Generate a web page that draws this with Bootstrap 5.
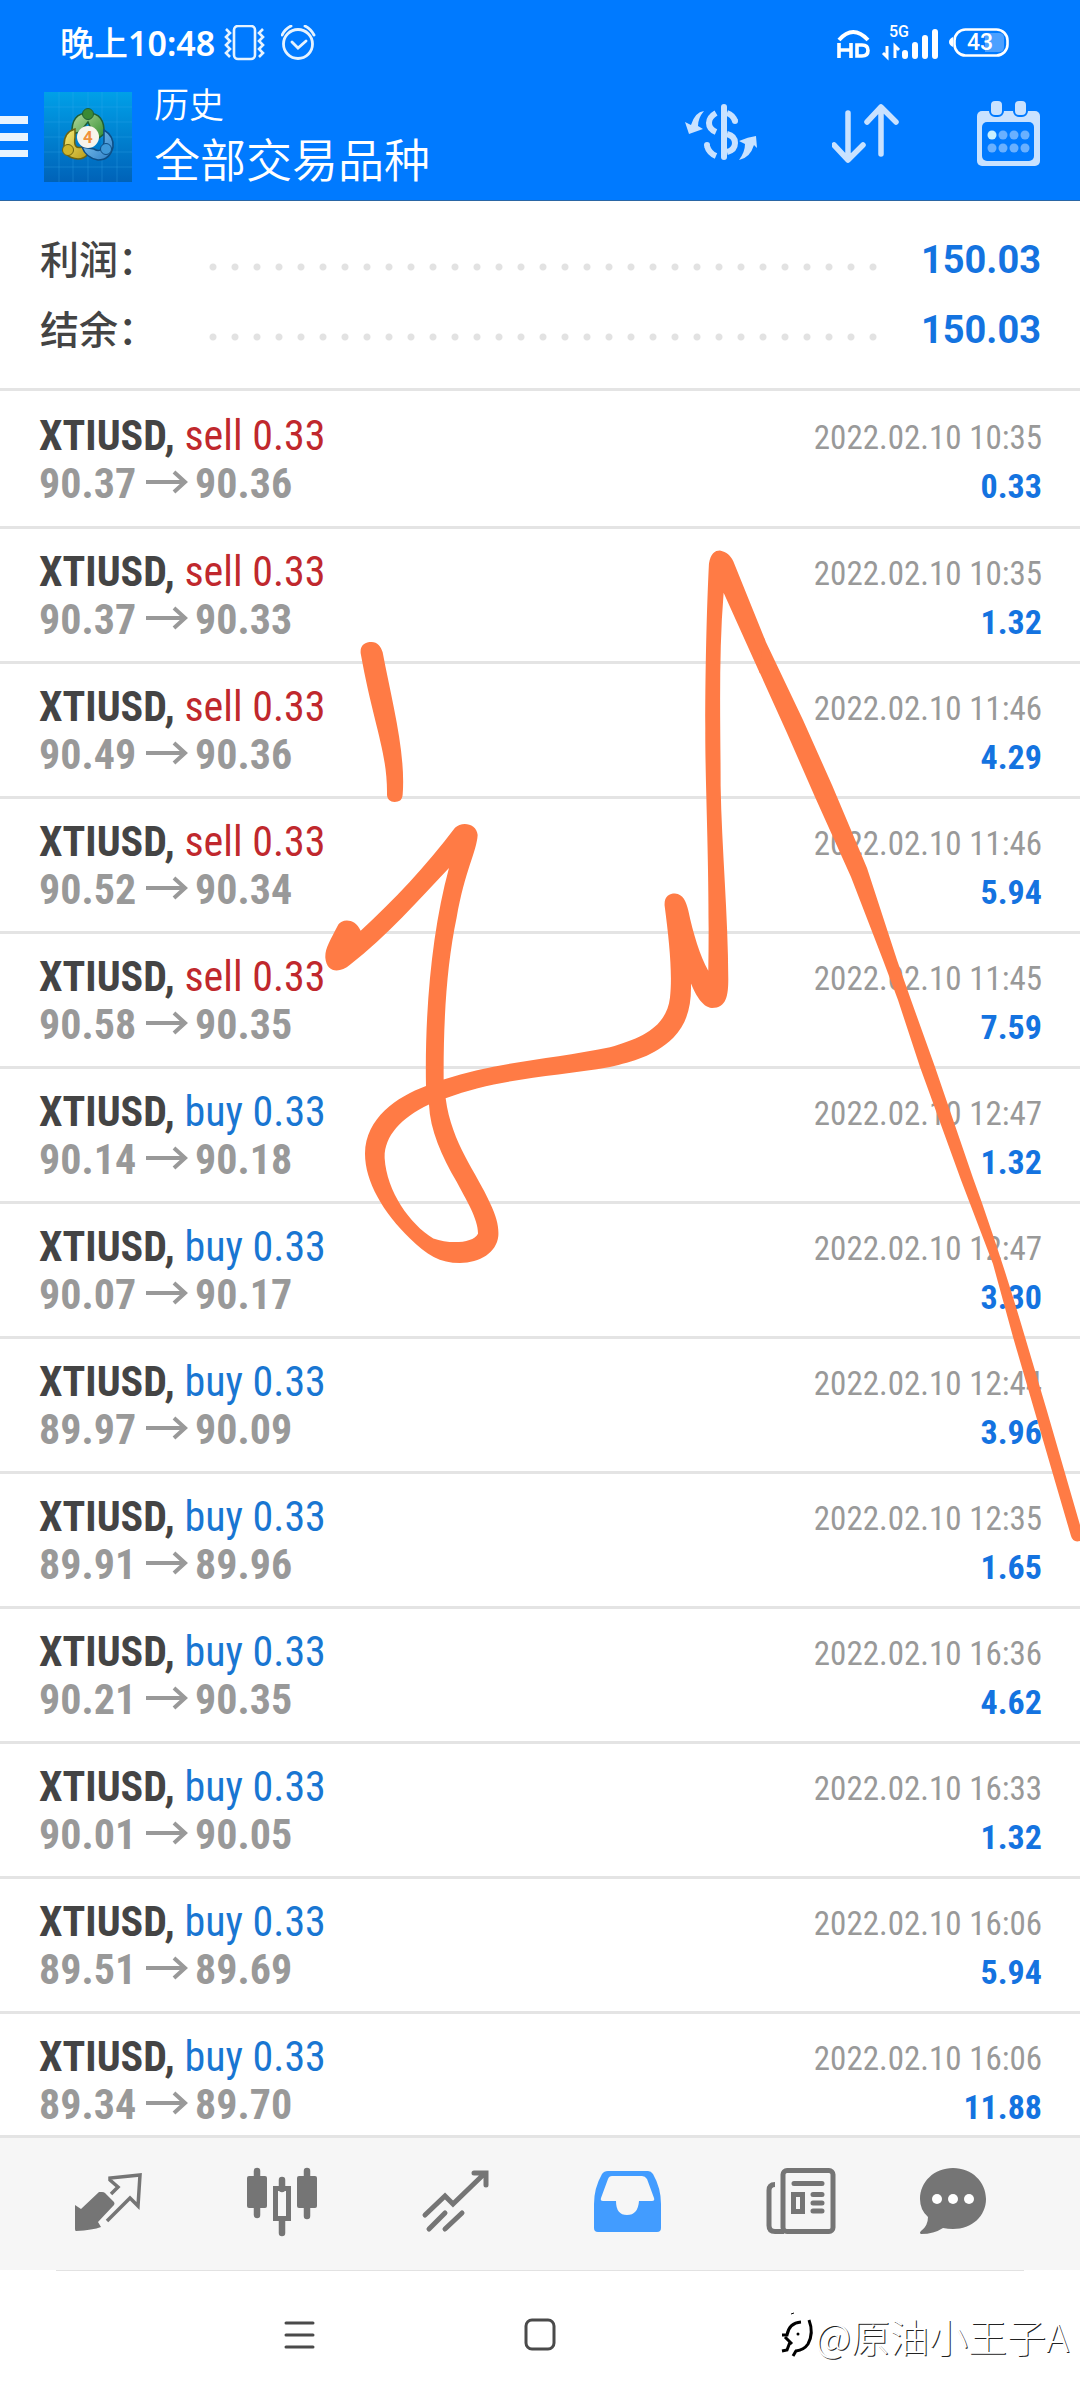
<!DOCTYPE html>
<html lang="zh-CN">
<head>
<meta charset="utf-8">
<meta name="viewport" content="width=device-width, initial-scale=1">
<title>历史</title>
<link href="https://cdn.jsdelivr.net/npm/bootstrap@5.3.0/dist/css/bootstrap.min.css" rel="stylesheet">
<style>
body{font-family:Roboto,"Noto Sans CJK SC",sans-serif;background:#fff;color:#444}
svg{display:block;flex:none}
.top-area{background:#007aff;color:#fff;border-bottom:1px solid #2a66a5;height:201px}
.status-row{height:84px;padding:2px 71px 0 60px;font-size:34px;line-height:40px;font-weight:500;font-family:"Noto Sans","Noto Sans CJK SC",sans-serif}
.title-row{height:116px;padding-right:40px}
.plain-btn{background:none;border:0;padding:0}
.app-title{font-family:"Noto Sans CJK SC",sans-serif;font-weight:350;margin-left:22px}
.app-title h1{font-size:35px;line-height:38px;margin:0;font-weight:inherit}
.app-title p{font-size:46px;line-height:70px;margin:0}
.tools{gap:74px}
.summary{padding:24px 39px 23px 40px}
.sum-line{height:70px;font-size:38px;line-height:70px;font-weight:500}
.sum-label{width:162px;font-size:39px;line-height:64px;height:70px;font-family:"Noto Sans CJK SC",sans-serif}
.dots{height:8px;margin-top:14px;background:radial-gradient(circle at 11px 4px,#e2e2e2 3px,transparent 4px) 0 0/22px 8px repeat-x}
.sum-value{width:156px;color:#1473e0;font-weight:700}
.history{border-top:3px solid #e4e4e4;min-height:0;overflow:hidden}
.deal{height:135px;padding:19px 38px 0 39px;border-bottom:3px solid #e4e4e4;font-family:"Roboto Condensed","Liberation Sans Narrow",Roboto,sans-serif}
.deal:first-of-type{height:138px;padding-top:21px}
.l-line{font-size:42px;line-height:48px;white-space:nowrap}
.r-line{font-size:33px;line-height:48px;white-space:nowrap;padding-top:2px}
.sym{font-weight:700;color:#444}
.sell{color:#c0282d}
.buy{color:#1976d2}
.price{color:#999;font-weight:700}
.price svg{display:inline-block;margin:0 7px 10px 10px;vertical-align:middle}
.when{color:#999}
.gain{color:#1473e0;font-weight:700;font-size:34px}
.tabs-bar{height:135px;background:#f6f6f6;border-top:3px solid #e4e4e4;padding:0 61px 4px 22px;color:#757575}
.tabs-bar a{flex:173 1 0;color:inherit}
.tabs-bar a:last-child{flex-grow:132}
.tabs-bar a.current{color:#429cff}
.sys-bar{height:130px;color:#4a4a4a;margin:0}
.sys-line{height:1px;background:#e2e2e2;margin:0 56px}
.sys-row{height:127px}
.sys-menu{margin-left:284px}
.sys-home{margin-left:209px}
.stamp{margin-left:auto;padding-right:11px;color:#fff;font-family:"Noto Sans CJK SC",sans-serif;font-weight:300;font-size:39px;line-height:50px;text-shadow:1px 1px 0 #222}
.scribble{position:absolute;left:0;top:540px;pointer-events:none}
</style>
</head>
<body>
<div class="position-relative d-flex flex-column vh-100 overflow-hidden">
<header class="top-area flex-shrink-0">
  <div class="status-row d-flex align-items-center">
    <span>晚上<b class="fw-semibold">10:48</b></span>
    <svg class="ms-2" width="42" height="36" viewBox="-2 1 42 36" fill="none" stroke="#e6f3ff" stroke-width="2.6"><rect x="9" y="2" width="21" height="33" rx="4"/><path d="M1 5l4 4-4 4 4 4-4 4 4 4-4 4 4 4M38 5l-4 4 4 4-4 4 4 4-4 4 4 4-4 4"/></svg>
    <svg class="ms-3" width="36" height="36" viewBox="1 1 36 36" fill="none" stroke="#e6f3ff" stroke-width="2.8" stroke-linecap="round"><circle cx="18" cy="20" r="14.500"/><path d="M12 18l6 6 8-7M2 11q3-6 9-9M34 11q-3-6-9-9"/></svg>
    <svg class="ms-auto" width="173" height="48" viewBox="836 19 173 48" fill="none" stroke="#fff"><path d="M839 40Q853 24 868 40" stroke-width="4"/><path d="M839 43v15M851 43v15M839 50h12M857 45v11h5q6 0 6-5.500t-6-5.500z" stroke-width="3.600"/><path d="M883 53l4 4V46M899 50l-4-4v12" stroke-width="3"/><path d="M905 53v3M915 45v11M925 38v18M935 32v24" stroke-width="6" stroke-linecap="round"/><path d="M985 33h14q5 0 5 5v9q0 5-5 5h-14z" fill="#4ca0ff" stroke="none"/><rect x="954.500" y="29.500" width="53" height="26" rx="11" stroke-width="2.600"/><path d="M953 37q-4 2-4 5t4 5z" fill="#fff" stroke="none"/><text x="889" y="37" font-size="16" font-family="Roboto" font-weight="500" fill="#fff" stroke="none">5G</text><text x="967" y="50" font-size="23" font-family="Roboto" font-weight="500" fill="#fff" stroke="none">43</text></svg>
  </div>
  <div class="title-row d-flex align-items-start">
    <button class="plain-btn" aria-label="菜单"><svg width="44" height="100" viewBox="0 84 44 100" fill="#e8f4ff"><path d="M0 116h28v8H0zM0 133h28v8H0zM0 150h28v7H0z"/></svg></button>
    <svg class="mt-2" width="88" height="90" viewBox="0 0 88 90"><defs><linearGradient id="sky" x2="0" y2="1"><stop stop-color="#00a0e8"/><stop offset="1" stop-color="#0062b8"/></linearGradient><linearGradient id="gl" x2="1" y2="1"><stop stop-color="#b4dca0"/><stop offset="1" stop-color="#2f8a2c"/></linearGradient><linearGradient id="yl" x2="1" y2="1"><stop stop-color="#f6ec78"/><stop offset="1" stop-color="#b89a16"/></linearGradient><linearGradient id="bw" x2="1" y2="1"><stop stop-color="#8fd0f6"/><stop offset="1" stop-color="#2a7cc4"/></linearGradient></defs><rect width="88" height="90" fill="url(#sky)"/><path d="M15 0v90M29 0v90M44 0v90M58 0v90M73 0v90M0 15h88M0 30h88M0 45h88M0 60h88M0 75h88" stroke="#3bb0ec" stroke-opacity=".28"/><g stroke-width="1.500"><path d="M28 42Q27 21 44 21T60 42L52 48 44 30 36 40z" fill="url(#gl)" stroke="#205f35"/><path d="M31 37Q20 40 20 53 20 66 34 67 40 67 44 62L38 55Q29 58 31 45z" fill="url(#yl)" stroke="#6c6410"/><path d="M60 38Q70 44 69 55 66 68 54 68 42 66 38 55L50 57Q58 62 60 50z" fill="url(#bw)" stroke="#0e4e85"/></g><circle cx="44" cy="22" r="5.500" fill="#3b8a35" stroke="#205f35"/><circle cx="24" cy="58" r="5.500" fill="#cdb52c" stroke="#6c6410"/><circle cx="62" cy="57" r="5.500" fill="#3f98d8" stroke="#0e4e85"/><circle cx="44" cy="45" r="11" fill="#f7f4ec"/><text x="44" y="51" text-anchor="middle" font-size="17" font-weight="700" font-family="Roboto" fill="#f0913c">4</text></svg>
    <div class="app-title"><h1>历史</h1><p>全部交易品种</p></div>
    <div class="tools d-flex ms-auto mt-3">
      <button class="plain-btn" aria-label="资金"><svg width="74" height="66" viewBox="685 101 74 66" fill="none" stroke="#c9e2ff" stroke-width="6"><path d="M725 108v50" stroke-linecap="round"/><path d="M717 114q-7 4-7 10t7 9M717 157q-7-3-9-10M728 114q6 2 8 8M728 135q8 2 8 9t-8 9" /><circle cx="736" cy="122" r="3" fill="#c9e2ff" stroke="none"/><circle cx="708" cy="146" r="3" fill="#c9e2ff" stroke="none"/><path d="M705 112q-9 1-13 14l-6-3 4 12 14-5-5-3q0-8 6-15zM740 161q11-2 15-15l3 3-1-12q-8 1-17 5l6 3q0 8-6 16z" fill="#c9e2ff" stroke="none"/></svg></button>
      <button class="plain-btn" aria-label="排序"><svg width="70" height="66" viewBox="832 101 70 66" fill="none" stroke="#c9e2ff" stroke-width="5.500" stroke-linecap="round" stroke-linejoin="round"><path d="M848 114v46M834 146l14 15 15-15M881 155v-46M867 123l14-15 15 15"/></svg></button>
      <button class="plain-btn" aria-label="日期"><svg width="64" height="66" viewBox="976 100 64 66"><rect x="977" y="111" width="63" height="55" rx="5" fill="#c9e2ff"/><rect x="982" y="122" width="52" height="39" rx="5" fill="#007aff"/><g fill="#c9e2ff" stroke="#007aff" stroke-width="2"><rect x="990" y="100" width="13" height="16" rx="5"/><rect x="1014" y="100" width="13" height="16" rx="5"/></g><g fill="#69b0ff"><circle cx="992" cy="135" r="4.500" fill="#c9f0ff"/><circle cx="1003" cy="135" r="4.500"/><circle cx="1014" cy="135" r="4.500"/><circle cx="1025" cy="135" r="4.500"/><circle cx="992" cy="148" r="4.500"/><circle cx="1003" cy="148" r="4.500"/><circle cx="1014" cy="148" r="4.500"/><circle cx="1025" cy="148" r="4.500"/></g></svg></button>
    </div>
  </div>
</header>

<section class="summary flex-shrink-0">
  <div class="sum-line d-flex align-items-center"><span class="sum-label">利润：</span><span class="dots flex-grow-1"></span><span class="sum-value text-end">150.03</span></div>
  <div class="sum-line d-flex align-items-center"><span class="sum-label">结余：</span><span class="dots flex-grow-1"></span><span class="sum-value text-end">150.03</span></div>
</section>

<svg width="0" height="0" class="position-absolute"><symbol id="to" viewBox="0 0 42 24"><path d="M0 12h39M28 2l11 10-11 10" fill="none" stroke="#999" stroke-width="4"/></symbol></svg>

<main class="history flex-grow-1">
  <div class="deal d-flex justify-content-between"><div class="l-line"><div><span class="sym">XTIUSD,</span> <span class="sell">sell 0.33</span></div><div class="price">90.37<svg width="42" height="24"><use href="#to"/></svg>90.36</div></div><div class="r-line text-end"><div class="when">2022.02.10 10:35</div><div class="gain">0.33</div></div></div>
  <div class="deal d-flex justify-content-between"><div class="l-line"><div><span class="sym">XTIUSD,</span> <span class="sell">sell 0.33</span></div><div class="price">90.37<svg width="42" height="24"><use href="#to"/></svg>90.33</div></div><div class="r-line text-end"><div class="when">2022.02.10 10:35</div><div class="gain">1.32</div></div></div>
  <div class="deal d-flex justify-content-between"><div class="l-line"><div><span class="sym">XTIUSD,</span> <span class="sell">sell 0.33</span></div><div class="price">90.49<svg width="42" height="24"><use href="#to"/></svg>90.36</div></div><div class="r-line text-end"><div class="when">2022.02.10 11:46</div><div class="gain">4.29</div></div></div>
  <div class="deal d-flex justify-content-between"><div class="l-line"><div><span class="sym">XTIUSD,</span> <span class="sell">sell 0.33</span></div><div class="price">90.52<svg width="42" height="24"><use href="#to"/></svg>90.34</div></div><div class="r-line text-end"><div class="when">2022.02.10 11:46</div><div class="gain">5.94</div></div></div>
  <div class="deal d-flex justify-content-between"><div class="l-line"><div><span class="sym">XTIUSD,</span> <span class="sell">sell 0.33</span></div><div class="price">90.58<svg width="42" height="24"><use href="#to"/></svg>90.35</div></div><div class="r-line text-end"><div class="when">2022.02.10 11:45</div><div class="gain">7.59</div></div></div>
  <div class="deal d-flex justify-content-between"><div class="l-line"><div><span class="sym">XTIUSD,</span> <span class="buy">buy 0.33</span></div><div class="price">90.14<svg width="42" height="24"><use href="#to"/></svg>90.18</div></div><div class="r-line text-end"><div class="when">2022.02.10 12:47</div><div class="gain">1.32</div></div></div>
  <div class="deal d-flex justify-content-between"><div class="l-line"><div><span class="sym">XTIUSD,</span> <span class="buy">buy 0.33</span></div><div class="price">90.07<svg width="42" height="24"><use href="#to"/></svg>90.17</div></div><div class="r-line text-end"><div class="when">2022.02.10 12:47</div><div class="gain">3.30</div></div></div>
  <div class="deal d-flex justify-content-between"><div class="l-line"><div><span class="sym">XTIUSD,</span> <span class="buy">buy 0.33</span></div><div class="price">89.97<svg width="42" height="24"><use href="#to"/></svg>90.09</div></div><div class="r-line text-end"><div class="when">2022.02.10 12:44</div><div class="gain">3.96</div></div></div>
  <div class="deal d-flex justify-content-between"><div class="l-line"><div><span class="sym">XTIUSD,</span> <span class="buy">buy 0.33</span></div><div class="price">89.91<svg width="42" height="24"><use href="#to"/></svg>89.96</div></div><div class="r-line text-end"><div class="when">2022.02.10 12:35</div><div class="gain">1.65</div></div></div>
  <div class="deal d-flex justify-content-between"><div class="l-line"><div><span class="sym">XTIUSD,</span> <span class="buy">buy 0.33</span></div><div class="price">90.21<svg width="42" height="24"><use href="#to"/></svg>90.35</div></div><div class="r-line text-end"><div class="when">2022.02.10 16:36</div><div class="gain">4.62</div></div></div>
  <div class="deal d-flex justify-content-between"><div class="l-line"><div><span class="sym">XTIUSD,</span> <span class="buy">buy 0.33</span></div><div class="price">90.01<svg width="42" height="24"><use href="#to"/></svg>90.05</div></div><div class="r-line text-end"><div class="when">2022.02.10 16:33</div><div class="gain">1.32</div></div></div>
  <div class="deal d-flex justify-content-between"><div class="l-line"><div><span class="sym">XTIUSD,</span> <span class="buy">buy 0.33</span></div><div class="price">89.51<svg width="42" height="24"><use href="#to"/></svg>89.69</div></div><div class="r-line text-end"><div class="when">2022.02.10 16:06</div><div class="gain">5.94</div></div></div>
  <div class="deal d-flex justify-content-between"><div class="l-line"><div><span class="sym">XTIUSD,</span> <span class="buy">buy 0.33</span></div><div class="price">89.34<svg width="42" height="24"><use href="#to"/></svg>89.70</div></div><div class="r-line text-end"><div class="when">2022.02.10 16:06</div><div class="gain">11.88</div></div></div>
</main>

<nav class="tabs-bar d-flex align-items-center flex-shrink-0">
  <a href="#" class="d-flex justify-content-center" aria-label="行情"><svg width="68" height="70" viewBox="75 2167 68 70" fill="currentColor"><path d="M102 2192q2 0 3 1l9 9q1 2 0 3l-16 17 3 5q-8 3-25 4-1 0-1-2v-24l6 4 18-17z"/><path d="M111 2194l7-7-8-7v-2l30-3-2 31-8-8-23 23" fill="none" stroke="currentColor" stroke-width="3.500"/></svg></a>
  <a href="#" class="d-flex justify-content-center" aria-label="图表"><svg width="70" height="70" viewBox="246 2167 70 70" fill="currentColor"><path d="M256 2171v44M306 2171v45M281 2180v9M281 2221v12" stroke="currentColor" stroke-width="6.500" stroke-linecap="round"/><rect x="246" y="2176" width="20" height="32" rx="2"/><rect x="296" y="2176" width="20" height="32" rx="2"/><rect x="274.500" y="2188.500" width="13" height="30" fill="none" stroke="currentColor" stroke-width="5"/></svg></a>
  <a href="#" class="d-flex justify-content-center" aria-label="交易"><svg width="68" height="70" viewBox="420 2167 68 70" fill="none" stroke="currentColor" stroke-width="5" stroke-linecap="round"><path d="M424 2215l20-19 8 8 30-29M473 2173h12v12M428 2229l16-16M444 2229l17-16"/></svg></a>
  <a href="#" class="current d-flex justify-content-center" aria-label="历史"><svg width="68" height="70" viewBox="594 2167 68 70" fill="currentColor" fill-rule="evenodd"><path d="M608 2171h40q3 0 5 3 8 14 8 30v24q0 4-4 4h-59q-4 0-4-4v-24q0-16 8-30 2-3 6-3zM612 2176q-3 0-4 3l-7 19q-1 3 2 3h13q0 14 11 14t12-14h13q3 0 2-3l-7-19q-2-3-5-3z"/></svg></a>
  <a href="#" class="d-flex justify-content-center" aria-label="新闻"><svg width="70" height="70" viewBox="766 2167 70 70" fill="none" stroke="currentColor" stroke-width="5"><rect x="783" y="2170.500" width="50" height="61" rx="4"/><path d="M784 2231.500h-9q-6 0-6-6v-35q0-6 6-6"/><path d="M794 2183.500h28M813 2194.500h9M813 2203h9M813 2211h9" stroke-linecap="round"/><rect x="793.500" y="2194.500" width="9" height="17"/></svg></a>
  <a href="#" class="d-flex justify-content-center" aria-label="消息"><svg width="68" height="70" viewBox="919 2167 68 70" fill="currentColor"><path d="M953 2168c19 0 33 14 33 31s-14 30-33 30q-5 0-10-1-9 6-22 6-2-1 0-3 7-5 7-14-8-7-8-18c0-17 14-31 33-31z"/><g fill="#fff"><circle cx="937" cy="2199" r="5"/><circle cx="953" cy="2199" r="5"/><circle cx="969" cy="2199" r="5"/></g></svg></a>
</nav>
<footer class="sys-bar flex-shrink-0">
  <div class="sys-line"></div>
  <div class="sys-row d-flex align-items-center">
    <button class="plain-btn sys-menu" aria-label="最近任务"><svg width="31" height="30" fill="none" stroke="#4a4a4a" stroke-width="3" stroke-linecap="round"><path d="M2 3h27M2 15h27M2 27h27"/></svg></button>
    <button class="plain-btn sys-home" aria-label="主屏幕"><svg width="32" height="33" fill="none" stroke="#4a4a4a" stroke-width="3"><rect x="2" y="2" width="28" height="29" rx="6"/></svg></button>
    <div class="stamp d-flex align-items-center"><svg width="36" height="48" viewBox="0 0 36 48" fill="none" stroke="#000"><path d="M2 24h5q2-12 14-13" stroke-width="3"/><path d="M29 9q5 13-1 24-4 6-12 7l-3 5" stroke-width="3"/><path d="M5 26l7 7M2 40l5-1 3-8" stroke-width="3"/><circle cx="18" cy="23" r="1.500" fill="#000" stroke="none"/><path d="M11 3l3-1" stroke-width="1"/></svg><span>@原油小王子A</span></div>
  </div>
</footer>

<svg class="scribble" width="1080" height="1010" viewBox="0 540 1080 1010" fill="#ff7b45" fill-rule="evenodd">
  <g transform="translate(300 540) scale(.3333 .4719)">
    <path d="M182 240C180 222 195 216 215 216C232 216 243 225 248 238C275 340 318 450 308 540C306 552 298 555 284 555C270 555 262 550 261 540C263 450 220 390 182 240Z"/>
    <path d="M76 885C75 865 90 850 115 815C125 803 165 800 182 828C280 765 380 690 465 610C485 595 530 600 533 625C530 660 495 700 470 800C440 900 430 1020 431 1143C600 1105 760 1100 930 1075C1030 1055 1100 1030 1110 970C1118 920 1108 850 1094 775C1092 755 1108 749 1125 749C1150 751 1158 765 1165 785C1180 835 1200 880 1225 913C1230 700 1215 520 1216 400C1216 250 1222 120 1227 50C1232 28 1245 22 1260 22C1280 25 1292 33 1300 45L1396 213L1380 283L1271 112C1255 250 1262 400 1262 520C1265 650 1285 800 1285 930C1285 965 1280 992 1236 992C1205 990 1185 960 1173 940C1175 990 1160 1025 1120 1055C1060 1095 1000 1105 930 1117C760 1138 600 1140 437 1183C455 1280 530 1340 570 1405C590 1435 597 1455 595 1475C590 1510 540 1532 480 1532C420 1532 380 1515 330 1480C250 1425 195 1360 195 1300C197 1225 290 1180 378 1157C374 1000 395 830 447 695C360 760 260 840 150 900C120 918 80 918 76 885ZM387 1196C300 1225 252 1265 254 1310C260 1380 330 1450 400 1480C450 1493 520 1490 534 1470C535 1440 500 1400 470 1360C425 1305 390 1250 387 1196Z"/>
  </g>
  <path d="M764 638L803 720L832 785L867 868L897 960L911 1000L935 1067L973 1178L982 1203Q1006 1272 1025 1337L1047 1411L1080 1525V1541Q1073 1543 1071 1536L1052 1471L1013 1337L993 1264L961 1180L920 1067L898 1000L883 960L851 877L815 797L787 733L759 671Z"/>
</svg>
</div>
<script src="https://cdn.jsdelivr.net/npm/bootstrap@5.3.0/dist/js/bootstrap.bundle.min.js"></script>
</body>
</html>
